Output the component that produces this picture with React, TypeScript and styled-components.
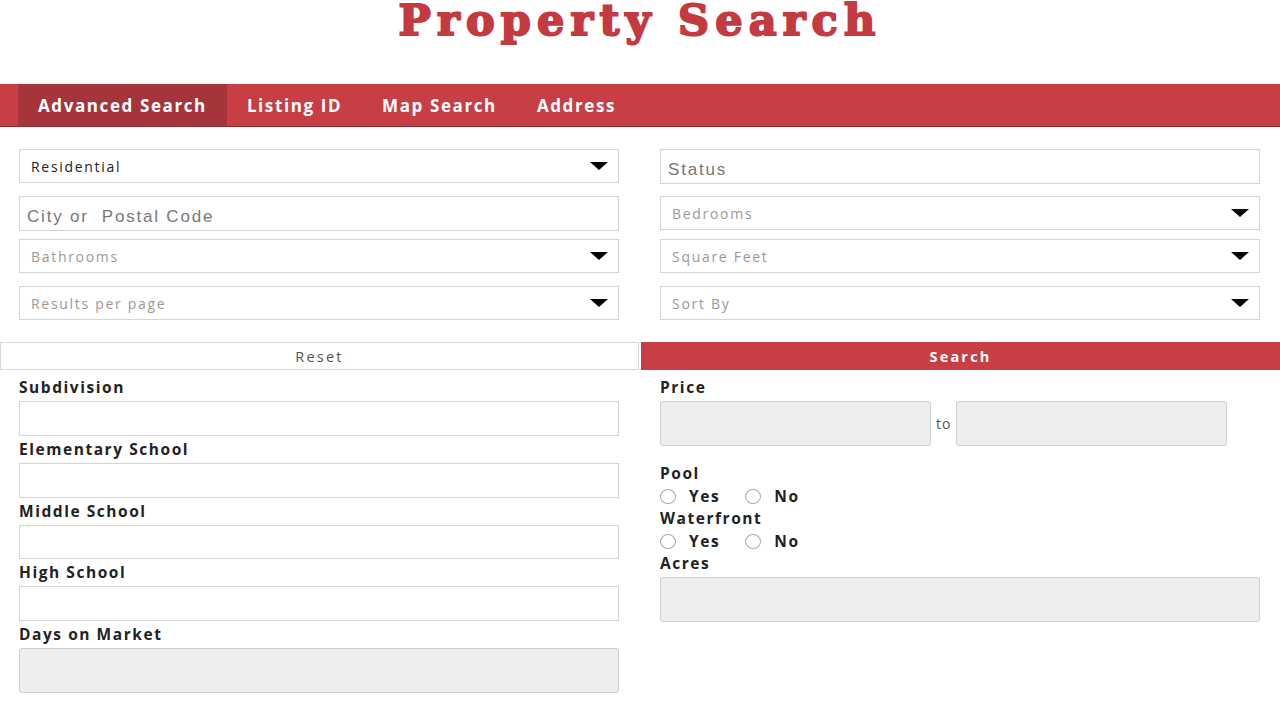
import React from 'react';
import styled, { createGlobalStyle } from 'styled-components';

const Global = createGlobalStyle`
  html, body { margin: 0; padding: 0; background: #fff; }
  body { font-family: 'Open Sans', 'Liberation Sans', sans-serif; color: #222; }
  * { box-sizing: border-box; }
`;

const Page = styled.div`
  width: 1280px;
`;

const Header = styled.header`
  height: 84px;
  display: flex;
  justify-content: center;
  align-items: flex-start;
`;

const Title = styled.h1`
  margin: 0;
  font-family: 'DejaVu Serif', 'Liberation Serif', serif;
  font-weight: 700;
  font-size: 43px;
  line-height: 40px;
  color: #c33b41;
  letter-spacing: 6.2px;
  -webkit-text-stroke: 2px #c33b41;
`;

const Nav = styled.nav`
  height: 43px;
  background: #c73f45;
  border-bottom: 1px solid #8c2a2f;
  display: flex;
  padding-left: 18px;
`;

const Tab = styled.a<{ $active?: boolean }>`
  display: flex;
  align-items: center;
  padding: 0 20px;
  color: #fff;
  font-weight: 700;
  font-size: 17px;
  letter-spacing: 1.6px;
  text-decoration: none;
  background: ${(p) => (p.$active ? '#a5353a' : 'transparent')};
`;

const Filters = styled.section`
  padding: 22px 0 0 19px;
`;

const FilterRow = styled.div<{ $mt: number }>`
  display: grid;
  grid-template-columns: 600px 600px;
  column-gap: 41px;
  margin-top: ${(p) => p.$mt}px;
`;

const Box = styled.div<{ $h: number; $color?: string }>`
  height: ${(p) => p.$h}px;
  border: 1px solid #d4d4d4;
  background: #fff;
  display: flex;
  align-items: center;
  justify-content: space-between;
  padding: 0 10px 0 11px;
  font-size: 14px;
  letter-spacing: 1.7px;
  color: ${(p) => p.$color ?? '#999'};
`;

const PlainBox = styled.div<{ $h: number }>`
  height: ${(p) => p.$h}px;
  border: 1px solid #d4d4d4;
  background: #fff;
  display: flex;
  align-items: center;
  padding: 7px 7px 0;
  font-family: 'Liberation Sans', Arial, sans-serif;
  font-size: 17px;
  letter-spacing: 1.8px;
  white-space: pre;
  color: #777;
`;

const Caret = styled.span`
  width: 0;
  height: 0;
  border-left: 9px solid transparent;
  border-right: 9px solid transparent;
  border-top: 8px solid #000;
`;

const ButtonBar = styled.div`
  margin-top: 22px;
  display: grid;
  grid-template-columns: 639px 639px;
  column-gap: 2px;
  height: 28px;
`;

const Button = styled.button<{ $primary?: boolean }>`
  height: 28px;
  border: 1px solid ${(p) => (p.$primary ? '#c73f45' : '#d8d8d8')};
  background: ${(p) => (p.$primary ? '#c73f45' : '#fff')};
  color: ${(p) => (p.$primary ? '#fff' : '#555')};
  font-family: 'Open Sans', sans-serif;
  font-weight: ${(p) => (p.$primary ? 700 : 400)};
  font-size: 14.5px;
  letter-spacing: 2.2px;
  padding: 0;
`;

const Details = styled.section`
  display: grid;
  grid-template-columns: 600px 600px;
  column-gap: 41px;
  padding: 7px 0 0 19px;
`;

const Column = styled.div`
  display: flex;
  flex-direction: column;
`;

const Label = styled.div<{ $mt?: number }>`
  font-weight: 700;
  font-size: 15.5px;
  line-height: 20px;
  letter-spacing: 1.55px;
  color: #222;
  margin-top: ${(p) => p.$mt ?? 0}px;
  margin-bottom: 4px;
`;

const TextInput = styled.div<{ $h: number; $grey?: boolean; $w?: number }>`
  height: ${(p) => p.$h}px;
  width: ${(p) => (p.$w ? `${p.$w}px` : '100%')};
  border: 1px solid ${(p) => (p.$grey ? '#cfcfcf' : '#d4d4d4')};
  border-radius: ${(p) => (p.$grey ? 3 : 0)}px;
  background: ${(p) => (p.$grey ? '#eeeeee' : '#fff')};
  margin-bottom: 3px;
`;

const Range = styled.div`
  display: flex;
  align-items: center;
  gap: 5px;
`;

const RangeSep = styled.span`
  font-size: 14px;
  color: #555;
  letter-spacing: 1px;
  margin-bottom: 3px;
`;

const RadioRow = styled.div`
  display: flex;
  align-items: center;
  height: 20px;
  margin-top: -1px;
  margin-bottom: 2px;
`;

const RadioOption = styled.label`
  display: flex;
  align-items: center;
  gap: 13px;
  margin-right: 25px;
  font-weight: 700;
  font-size: 15.5px;
  letter-spacing: 1.6px;
  color: #222;
`;

const RadioDot = styled.span`
  width: 16px;
  height: 15px;
  border-radius: 50%;
  border: 1px solid #aaa;
  background: #fff;
`;

type Cell = { kind: 'select' | 'plain'; text: string; color?: string; h: number };

const filterRows: { left: Cell; right: Cell; mt: number }[] = [
  { left: { kind: 'select', text: 'Residential', color: '#222', h: 34 }, right: { kind: 'plain', text: 'Status', h: 35 }, mt: 0 },
  { left: { kind: 'plain', text: 'City or  Postal Code', h: 35 }, right: { kind: 'select', text: 'Bedrooms', h: 34 }, mt: 12 },
  { left: { kind: 'select', text: 'Bathrooms', h: 34 }, right: { kind: 'select', text: 'Square Feet', h: 34 }, mt: 8 },
  { left: { kind: 'select', text: 'Results per page', h: 34 }, right: { kind: 'select', text: 'Sort By', h: 34 }, mt: 13 },
];

function renderCell(c: Cell) {
  if (c.kind === 'plain') return <PlainBox $h={c.h}>{c.text}</PlainBox>;
  return (
    <Box $h={c.h} $color={c.color}>
      <span>{c.text}</span>
      <Caret />
    </Box>
  );
}

function Radios() {
  return (
    <RadioRow>
      <RadioOption>
        <RadioDot />
        Yes
      </RadioOption>
      <RadioOption>
        <RadioDot />
        No
      </RadioOption>
    </RadioRow>
  );
}

export default function App() {
  return (
    <Page>
      <Global />
      <Header>
        <Title>Property Search</Title>
      </Header>
      <Nav>
        <Tab $active>Advanced Search</Tab>
        <Tab>Listing ID</Tab>
        <Tab>Map Search</Tab>
        <Tab>Address</Tab>
      </Nav>
      <Filters>
        {filterRows.map((r, i) => (
          <FilterRow key={i} $mt={r.mt}>
            {renderCell(r.left)}
            {renderCell(r.right)}
          </FilterRow>
        ))}
      </Filters>
      <ButtonBar>
        <Button>Reset</Button>
        <Button $primary>Search</Button>
      </ButtonBar>
      <Details>
        <Column>
          <Label>Subdivision</Label>
          <TextInput $h={35} />
          <Label>Elementary School</Label>
          <TextInput $h={35} />
          <Label>Middle School</Label>
          <TextInput $h={34} />
          <Label>High School</Label>
          <TextInput $h={35} />
          <Label>Days on Market</Label>
          <TextInput $h={45} $grey />
        </Column>
        <Column>
          <Label>Price</Label>
          <Range>
            <TextInput $h={45} $grey $w={271} />
            <RangeSep>to</RangeSep>
            <TextInput $h={45} $grey $w={271} />
          </Range>
          <Label $mt={14}>Pool</Label>
          <Radios />
          <Label>Waterfront</Label>
          <Radios />
          <Label>Acres</Label>
          <TextInput $h={45} $grey />
        </Column>
      </Details>
    </Page>
  );
}
